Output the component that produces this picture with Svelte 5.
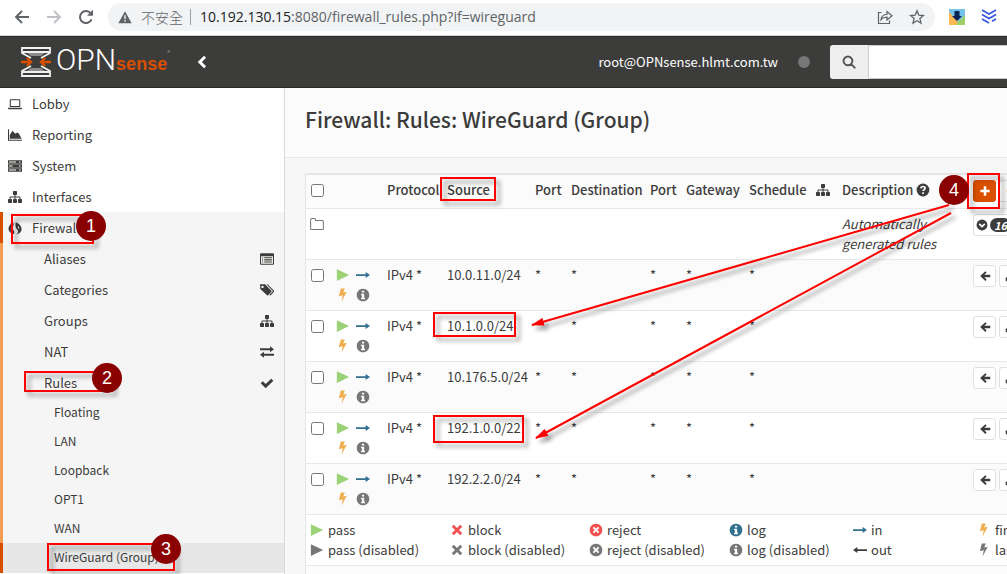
<script lang="ts">
    type MenuItem = { label: string; icon: string };

    const sitemap =
        '<path transform="scale(.00893)" d="M1792 1248v320q0 40-28 68t-68 28h-320q-40 0-68-28t-28-68v-320q0-40 28-68t68-28h96v-192h-512v192h96q40 0 68 28t28 68v320q0 40-28 68t-68 28h-320q-40 0-68-28t-28-68v-320q0-40 28-68t68-28h96v-192h-512v192h96q40 0 68 28t28 68v320q0 40-28 68t-68 28h-320q-40 0-68-28t-28-68v-320q0-40 28-68t68-28h96v-192q0-52 38-90t90-38h512v-192h-96q-40 0-68-28t-28-68v-320q0-40 28-68t68-28h320q40 0 68 28t28 68v320q0 40-28 68t-68 28h-96v192h512q52 0 90 38t38 90v192h96q40 0 68 28t28 68z"/>';

    // all icons sit on a 16x16 grid
    const icons: Record<string, string> = {
        laptop: '<path fill-rule="evenodd" d="M3 2.500h10a1 1 0 0 1 1 1v7a1 1 0 0 1-1 1H3a1 1 0 0 1-1-1v-7a1 1 0 0 1 1-1zm.2 1.200v6.600h9.600V3.700zM0 12.200h16v1a.8.8 0 0 1-.8.8H.8a.8.8 0 0 1-.8-.8z"/>',
        chart: '<path d="M0 1.500h1.200v11.800H16v1.200H0zM2 12.400V8L5.200 3.200l3 3.300 2.200-1.500 2.200 1.500 2.900 5.900z"/>',
        server: '<path fill-rule="evenodd" d="M0 1.500h16v3.800H0zm1.200 1.300v1.200h8V2.800zm11.300 0v1.200h1.800V2.800zM0 6.100h16v3.800H0zm1.200 1.300v1.200h4V7.400zm11.300 0v1.200h1.800V7.400zM0 10.700h16v3.800H0zM1.200 12v1.200h8V12zm11.300 0v1.200h1.800V12z"/>',
        sitemap,
        fire: '<path d="M7 1C7.800 4.800 4.300 6 5.800 9.500c.6 1.700 1.800 2.300 1.200 5.300C2.500 14.300.2 11.500.6 8.200c.4-2.700 2.200-3.300 2.500-5.500 1.100 1.100 1.100 2.200.9 3.300C5.600 4.900 6.200 3.200 7 1zM9 1.500c3.300 1.600 7.200 4.400 6.400 8.800-.4 2.700-2.700 4.300-5.800 4.700 2.700-1.700 2.200-3.700.8-5.500C8.700 7.500 7.900 4.800 9 1.500zm2.300 3.900c-.2 1.700.8 2.800 1.100 4.400.9-1.700.3-3.300-1.100-4.400z"/>',
        list: '<path fill-rule="evenodd" d="M1.200 1.500h13.600A1.200 1.200 0 0 1 16 2.700v10.600a1.200 1.200 0 0 1-1.200 1.200H1.200A1.200 1.200 0 0 1 0 13.300V2.700a1.200 1.200 0 0 1 1.200-1.200zm0 3.400v8.400h13.600V4.900zM2.400 6h1.200v1.200H2.400zm2.400 0h8.800v1.200H4.800zM2.400 8.400h1.200v1.200H2.400zm2.400 0h8.800v1.200H4.800zM2.400 10.800h1.200V12H2.400zm2.400 0h8.800V12H4.800z"/>',
        tags: '<path fill-rule="evenodd" d="M0 1.500h5.800L13 8.800a1 1 0 0 1 0 1.300l-4.300 4.400L.3 6.800zM2.800 3a1.400 1.400 0 1 0 .1 0z"/><path d="M7.500 1.500h1.300L16 8.800a1 1 0 0 1 0 1.300l-4.300 4.400-1-1 4.100-4.100z"/>',
        exchange: '<path d="M0 3.800h11.500V1.500L16 4.900l-4.500 3.400V6H0zM16 10H4.500V7.700L0 11.100l4.500 3.400v-2.300H16z"/>',
        check: '<path d="M.8 8.300 3.200 6l3.300 3.200 6.300-6.200 2.500 2.400-8.800 8.700z"/>',
        play: '<path d="M1 1.300 15 8 1 14.800z"/>',
        right: '<path d="M0 7h11V4.500L16 8l-5 3.500V9H0z"/>',
        left: '<path d="M16 7H5V4.500L0 8l5 3.500V9h11z"/>',
        bolt: '<path d="M5.500.5H10L8.300 5.200l4-.8L6.200 15.800l1.600-7.500-4.500 1z"/>',
        info: '<path fill-rule="evenodd" d="M8 .8a7.200 7.200 0 1 0 .01 0zM6.800 3h2.500v2.200H6.800zM5.800 6.500h3.500v4.600h1v1.700H5.800v-1.700h1V8.200h-1z"/>',
        times: '<path d="m4.300 2 3.700 3.700L11.700 2 14 4.300 10.300 8l3.700 3.700-2.300 2.300L8 10.300 4.300 14 2 11.700 5.700 8 2 4.300z"/>',
        reject: '<path fill-rule="evenodd" d="M8 .8a7.200 7.200 0 1 0 .01 0zM5.800 4.300 8 6.500l2.200-2.200 1.500 1.500L9.500 8l2.200 2.200-1.500 1.500L8 9.500l-2.200 2.200-1.500-1.500L6.500 8 4.300 5.800z"/>',
        help: '<circle cx="8" cy="8" r="7.300"/><path d="M5.600 6.200C5.700 4.600 6.800 4 8 4s2.400.7 2.400 2c0 1.600-2.300 1.700-2.300 3.200M8.100 10.600v1.900" fill="none" stroke="#fff" stroke-width="1.900"/>',
        plus: '<path d="M6.300 1.800h3.400v4.500h4.500v3.400H9.700v4.500H6.300V9.700H1.800V6.300h4.500z"/>',
        folder: '<path d="M.7 13V3a1.200 1.200 0 0 1 1.200-1.200h3.300A1.200 1.200 0 0 1 6.400 3v1h7.700a1.200 1.200 0 0 1 1.200 1.200V13a1.200 1.200 0 0 1-1.200 1.200H1.900A1.200 1.200 0 0 1 .7 13z" fill="none" stroke="currentColor" stroke-width="1.200"/>',
        arrowLeft: '<path d="m8.500 1.500 1.700 1.700-3.100 3.200H15v3.200H7.100l3.100 3.200-1.700 1.700L1.500 8z"/>',
        pencil: '<path d="M1 15v-4L10 2l4 4-9 9z"/>',
        down: '<circle cx="8" cy="8" r="7.300"/><path d="M4.300 6.500 8 10.200l3.700-3.700" fill="none" stroke="#fff" stroke-width="2.200"/>',
        search: '<path d="M6.800 1.800a5 5 0 1 0 .01 0zM10.500 10.500l4 4" fill="none" stroke="currentColor" stroke-width="2.200" stroke-linecap="round"/>',
        back: '<path d="M15 8H2M8 2 2 8l6 6" fill="none" stroke="currentColor" stroke-width="1.900"/>',
        forward: '<path d="M1 8h13M8 2l6 6-6 6" fill="none" stroke="currentColor" stroke-width="1.900"/>',
        reload: '<path d="M13.500 10.300A6 6 0 1 1 12.600 4.200" fill="none" stroke="currentColor" stroke-width="2"/><path d="M15 .8v6H9z"/>',
        warning: '<path fill-rule="evenodd" d="M8 1.500 15.600 15H.4zM7.200 6v4.500h1.600V6zm0 5.700v1.600h1.600v-1.600z"/>',
        share: '<path d="M4.500 3.500H1.500v11h11v-3M4 10.500c.5-3.500 2.500-5 6-5V2.500l5 4.300-5 4.200V8.200c-2.800 0-4.600.6-6 2.300z" fill="none" stroke="currentColor" stroke-width="1.200"/>',
        star: '<path d="m8 1.800 1.800 4.400 4.700.3-3.600 3.100 1.100 4.600L8 11.700l-4 2.500 1.100-4.600L1.500 6.500l4.700-.3z" fill="none" stroke="currentColor" stroke-width="1.300"/>',
        chevron: '<path d="M11.500 2 5.500 8l6 6" fill="none" stroke="currentColor" stroke-width="3.400"/>'
    };

    const topMenu: MenuItem[] = [
        { label: 'Lobby', icon: 'laptop' },
        { label: 'Reporting', icon: 'chart' },
        { label: 'System', icon: 'server' },
        { label: 'Interfaces', icon: 'sitemap' }
    ];

    const firewallMenu: MenuItem[] = [
        { label: 'Aliases', icon: 'list' },
        { label: 'Categories', icon: 'tags' },
        { label: 'Groups', icon: 'sitemap' },
        { label: 'NAT', icon: 'exchange' },
        { label: 'Rules', icon: 'check' }
    ];

    const ruleMenu = ['Floating', 'LAN', 'Loopback', 'OPT1', 'WAN', 'WireGuard (Group)'];

    const sources = ['10.0.11.0/24', '10.1.0.0/24', '10.176.5.0/24', '192.1.0.0/22', '192.2.2.0/24'];

    const legend = [
        { icon: 'play', label: 'pass', color: 'green' },
        { icon: 'times', label: 'block', color: 'red' },
        { icon: 'reject', label: 'reject', color: 'red' },
        { icon: 'info', label: 'log', color: 'blue' },
        { icon: 'right', label: 'in', color: 'blue' },
        { icon: 'bolt', label: 'first match', color: 'amber' },
        { icon: 'play', label: 'pass (disabled)', color: 'grey' },
        { icon: 'times', label: 'block (disabled)', color: 'grey' },
        { icon: 'reject', label: 'reject (disabled)', color: 'grey' },
        { icon: 'info', label: 'log (disabled)', color: 'grey' },
        { icon: 'left', label: 'out', color: 'dark' },
        { icon: 'bolt', label: 'last match', color: 'grey' }
    ];

    // callouts drawn over the page
    const boxes = [
        [12, 215, 81, 28],
        [25, 372, 87, 19],
        [48, 544, 126, 26],
        [441, 178, 54, 22],
        [434, 313, 81, 23],
        [434, 416, 89, 26],
        [968, 174, 31, 34]
    ];
    const badges = [
        [91, 226],
        [107, 378],
        [166, 549],
        [954, 190]
    ];
    const arrows = [
        [949, 205, 532, 325],
        [951, 213, 536, 438]
    ];

    let selected: boolean[] = $state(sources.map(() => false));
    let allSelected = $derived(selected.every(Boolean));

    function toggleAll() {
        const next = !allSelected;
        selected = selected.map(() => next);
    }
</script>

{#snippet icon(name: string, color = '')}
    <svg class="icon {color}" viewBox="0 0 16 16" aria-hidden="true">{@html icons[name]}</svg>
{/snippet}

<div class="page">
    <div class="browser">
        <button class="nav" aria-label="Back">{@render icon('back')}</button>
        <button class="nav off" aria-label="Forward">{@render icon('forward')}</button>
        <button class="nav" aria-label="Reload">{@render icon('reload')}</button>
        <div class="address">
            {@render icon('warning')}
            <span class="insecure">不安全</span>
            <span class="url">10.192.130.15<span>:8080/firewall_rules.php?if=wireguard</span></span>
            <button class="nav share" aria-label="Share">{@render icon('share')}</button>
            <button class="nav" aria-label="Bookmark">{@render icon('star')}</button>
        </div>
        <svg class="extension" viewBox="0 0 16 16" aria-hidden="true">
            <path fill="#72c2ea" d="M0 0h16v16H0z" />
            <path fill="#fcb954" d="M0 3v13h8l1-4z" />
            <path fill="#9fcf67" d="M6 16 16 6v10z" />
            <path fill="#062354" d="M5.500 2h5v5H13l-5 5-5-5h2.500z" />
        </svg>
        <svg class="extension" viewBox="0 0 16 16" aria-hidden="true">
            <path d="m1 1 7 4 7-4M1 5.500l7 4 7-4M1 10l7 4M11 12.300l4-2.300" fill="none" stroke="#3455e0" stroke-width="1.600" />
        </svg>
    </div>

    <header>
        <a class="brand" href="#lobby" aria-label="OPNsense">
            <svg viewBox="0 0 30 30" aria-hidden="true">
                <path d="M5 5h20l-5 4H10zM5 25h20l-5-4H10z" fill="#8b8b8b" />
                <path d="M10 11 1 6V1h28v5l-9 5M10 19l-9 5v5h28v-5l-9-5M2 5h26M2 25h26" fill="none" stroke="#f2f2f2" stroke-width="1.800" />
                <path d="M0 15h10M6 11l4 4-4 4M30 15H20M24 11l-4 4 4 4" fill="none" stroke="#d94f00" stroke-width="2.400" />
            </svg>
            <span class="word"><span class="opn">OPN</span><span class="sense">sense</span></span><sup>®</sup>
        </a>
        <button class="collapse" aria-label="Toggle menu">{@render icon('chevron')}</button>
        <span class="user">root@OPNsense.hlmt.com.tw</span>
        <span class="status"></span>
        <form class="search">
            <button type="button" aria-label="Search">{@render icon('search')}</button>
            <input type="text" aria-label="Search menu" />
        </form>
    </header>

    <div class="body">
        <nav class="menu">
            {#each topMenu as item}
                <a href="#{item.label}">{@render icon(item.icon)}{item.label}</a>
            {/each}
            <div class="open">
                <a class="current" href="#firewall">{@render icon('fire')}Firewall</a>
                {#each firewallMenu as item}
                    <a class="sub" href="#{item.label}">{item.label}{@render icon(item.icon)}</a>
                {/each}
                {#each ruleMenu as label}
                    <a class="leaf" class:active={label === 'WireGuard (Group)'} href="#{label}">{label}</a>
                {/each}
            </div>
        </nav>

        <main>
            <div class="title">
                <h1>Firewall: Rules: WireGuard (Group)</h1>
            </div>
            <div class="content">
                <table>
                    <thead>
                        <tr>
                            <th class="c-check"><input type="checkbox" aria-label="Select all" checked={allSelected} onchange={toggleAll} /></th>
                            <th class="c-icons"></th>
                            <th class="c-proto">Protocol</th>
                            <th class="c-source">Source</th>
                            <th class="c-port">Port</th>
                            <th class="c-dest">Destination</th>
                            <th class="c-port">Port</th>
                            <th class="c-gateway">Gateway</th>
                            <th class="c-schedule">Schedule</th>
                            <th class="c-map">{@render icon('sitemap')}</th>
                            <th>Description {@render icon('help')}</th>
                            <th class="c-actions">
                                <div class="actions">
                                    <button class="add" aria-label="Add">{@render icon('plus')}</button>
                                    <button aria-label="Move selected">{@render icon('arrowLeft', 'amber')}</button>
                                </div>
                            </th>
                        </tr>
                    </thead>
                    <tbody>
                        <tr>
                            <td>{@render icon('folder', 'grey')}</td>
                            <td colspan="9"></td>
                            <td><i>Automatically generated rules</i></td>
                            <td>
                                <div class="actions">
                                    <button class="count" aria-label="Show generated rules">{@render icon('down')}<b>16</b></button>
                                </div>
                            </td>
                        </tr>
                        {#each sources as source, i}
                            <tr>
                                <td><input type="checkbox" aria-label="Select {source}" bind:checked={selected[i]} /></td>
                                <td>
                                    <div class="flags">
                                        {@render icon('play', 'green')}
                                        {@render icon('right', 'blue')}
                                        {@render icon('bolt', 'amber')}
                                        {@render icon('info', 'grey')}
                                    </div>
                                </td>
                                <td>IPv4 *</td>
                                <td>{source}</td>
                                <td>*</td>
                                <td>*</td>
                                <td>*</td>
                                <td>*</td>
                                <td>*</td>
                                <td></td>
                                <td></td>
                                <td>
                                    <div class="actions">
                                        <button aria-label="Move before">{@render icon('arrowLeft')}</button>
                                        <button aria-label="Edit">{@render icon('pencil')}</button>
                                    </div>
                                </td>
                            </tr>
                        {/each}
                        <tr>
                            <td colspan="12">
                                <div class="legend">
                                    {#each legend as entry}
                                        <span>{@render icon(entry.icon, entry.color)}{entry.label}</span>
                                    {/each}
                                </div>
                            </td>
                        </tr>
                        <tr><td colspan="12">&nbsp;</td></tr>
                    </tbody>
                </table>
            </div>
        </main>
    </div>

    <svg class="callouts" aria-hidden="true">
        <defs>
            <marker id="head" markerUnits="userSpaceOnUse" markerWidth="14" markerHeight="8" refX="12" refY="4" orient="auto">
                <path d="M0 0 13 4 0 8z" fill="#f00" />
            </marker>
        </defs>
        <g class="marks">
            {#each boxes as [x, y, width, height]}
                <rect {x} {y} {width} {height} />
            {/each}
            {#each arrows as [x1, y1, x2, y2]}
                <line {x1} {y1} {x2} {y2} marker-end="url(#head)" />
            {/each}
        </g>
        {#each badges as [x, y], i}
            <circle cx={x} cy={y} r="15" />
            <text {x} y={y + 6}>{i + 1}</text>
        {/each}
    </svg>
</div>

<style>
    :global(body) {
        margin: 0;
    }
    .page {
        position: relative;
        display: flex;
        flex-direction: column;
        height: 100vh;
        overflow: hidden;
        color: #3c3c3b;
        font-family: "Noto Sans CJK TC", "Noto Sans", sans-serif;
        font-size: 13px;
        line-height: 20px;
    }
    button {
        display: flex;
        align-items: center;
        justify-content: center;
        box-sizing: border-box;
        padding: 0;
        border: none;
        background: none;
        color: inherit;
        font: inherit;
    }
    a {
        color: inherit;
        text-decoration: none;
    }
    .icon {
        flex-shrink: 0;
        width: 14px;
        height: 14px;
        fill: currentColor;
    }
    .green { color: #9bd275; }
    .red { color: #f05050; }
    .blue { color: #31708f; }
    .amber { color: #f0ad4e; }
    .grey { color: #777; }
    .dark { color: #3c3c3b; }

    /* browser toolbar */
    .browser {
        display: flex;
        align-items: center;
        flex-shrink: 0;
        box-sizing: border-box;
        height: 36px;
        padding: 0 10px 2px 14px;
        border-bottom: 1px solid #d5d6d8;
        background: #fff;
        color: #5f6368;
    }
    .nav {
        width: 16px;
        margin-right: 16px;
    }
    .nav .icon {
        width: 16px;
        height: 16px;
    }
    .off {
        color: #bdc1c6;
    }
    .address {
        display: flex;
        flex: 1;
        align-items: center;
        box-sizing: border-box;
        height: 28px;
        margin-left: -2px;
        margin-right: 14px;
        padding: 0 10px;
        border-radius: 14px;
        background: #f1f3f4;
        font-size: 14px;
    }
    .address .nav:last-child {
        margin-right: 0;
    }
    .insecure {
        margin-left: 9px;
        padding-right: 7px;
        border-right: 1px solid #9aa0a6;
        font-weight: 300;
        line-height: 16px;
    }
    .url {
        padding-left: 9px;
        color: #202124;
        font-family: "Open Sans", "Noto Sans", sans-serif;
    }
    .url span {
        color: #5f6368;
    }
    .share {
        margin-left: auto;
    }
    .extension {
        width: 16px;
        height: 16px;
    }
    .extension + .extension {
        margin-left: 16px;
    }

    /* top bar */
    header {
        display: flex;
        align-items: center;
        flex-shrink: 0;
        box-sizing: border-box;
        height: 52px;
        padding-left: 21px;
        border-top: 1px solid #2a2a29;
        border-bottom: 1px solid #2a2a29;
        background: #3c3c3b;
        color: #fff;
    }
    .brand {
        display: flex;
        align-items: center;
        width: 152px;
    }
    .brand svg {
        flex-shrink: 0;
        width: 30px;
        height: 30px;
        margin-right: 5px;
    }
    .word {
        line-height: 34px;
    }
    .opn {
        font-family: Roboto, sans-serif;
        font-size: 30px;
        font-weight: 300;
    }
    .sense {
        color: #d94f00;
        font-family: "Liberation Sans", sans-serif;
        font-size: 18px;
        font-weight: bold;
    }
    sup {
        align-self: flex-start;
        color: #999;
        font-size: 6px;
    }
    .collapse {
        margin-left: 22px;
    }
    .user {
        margin-left: auto;
    }
    .status {
        width: 12px;
        height: 12px;
        margin: 0 20px;
        border-radius: 50%;
        background: #777;
    }
    .search {
        display: flex;
        height: 34px;
    }
    .search button {
        width: 38px;
        border-radius: 3px 0 0 3px;
        background: #eee;
        color: #555;
    }
    .search input {
        box-sizing: border-box;
        width: 139px;
        padding: 0 12px;
        border: 1px solid #ccc;
        border-right: none;
        background: #fff;
    }

    .body {
        display: flex;
        flex: 1;
        min-height: 0;
    }

    /* side menu */
    .menu {
        flex-shrink: 0;
        box-sizing: border-box;
        width: 285px;
        border-right: 1px solid #d9d9d9;
        background: #fff;
    }
    .menu a {
        display: flex;
        align-items: center;
        box-sizing: border-box;
        height: 31px;
        padding: 0 10px 0 8px;
    }
    .menu > a .icon,
    .current .icon {
        margin-right: 10px;
    }
    .open {
        background: #f5f5f5;
    }
    .open a {
        border-left: 3px solid #f39c54;
    }
    .open .current {
        padding-left: 5px;
        border-color: #d94f00;
    }
    .open .sub {
        justify-content: space-between;
        padding-left: 41px;
    }
    .open .leaf {
        height: 29px;
        padding-bottom: 2px;
        padding-left: 51px;
        font-size: 12px;
    }
    .open .active {
        height: 30px;
        border-color: #d94f00;
        background: #e7e7e7;
    }

    /* rules */
    main {
        flex: 1;
        min-width: 0;
        background: #f7f7f7;
    }
    .title {
        padding: 17px 20px 23px;
        border-bottom: 1px solid #e8e8e8;
        background: #fbfbfb;
    }
    h1 {
        margin: 0;
        font-size: 21px;
        font-weight: 500;
        line-height: 29px;
    }
    .content {
        padding: 15px 0 0 20px;
    }
    table {
        width: 100%;
        border-top: 2px solid #e5e5e5;
        border-left: 1px solid #e5e5e5;
        border-spacing: 0;
        table-layout: fixed;
    }
    th,
    td {
        padding: 5px 0 5px 6px;
        border-bottom: 1px solid #e8e8e8;
        font-weight: normal;
        text-align: left;
        vertical-align: top;
        white-space: nowrap;
    }
    th {
        height: 22px;
        padding-bottom: 6px;
        font-weight: 500;
    }
    td i {
        white-space: normal;
    }
    tr {
        background: #fbfbfb;
    }
    tbody tr:nth-child(odd) {
        background: #fff;
    }
    th .icon,
    td > .icon {
        vertical-align: -2px;
    }
    th:first-child,
    td:first-child {
        padding-left: 4px;
    }
    .c-check { width: 20px; }
    .c-icons { width: 45px; }
    .c-proto { width: 54px; }
    .c-source { width: 82px; }
    .c-port { width: 30px; }
    .c-dest { width: 73px; }
    .c-gateway { width: 57px; }
    .c-schedule { width: 61px; }
    .c-map { width: 20px; }
    .c-actions { width: 34px; }
    table input {
        display: block;
        width: 13px;
        height: 13px;
        margin: 4px 0 0 1px;
    }
    .flags {
        display: grid;
        grid-template-columns: 14px 14px;
        column-gap: 6px;
        grid-auto-rows: 20px;
        align-items: center;
    }
    .actions {
        display: flex;
        gap: 3px;
        overflow: hidden;
    }
    .actions button {
        flex-shrink: 0;
        width: 23px;
        height: 22px;
        border: 1px solid #e0e0e0;
        border-radius: 3px;
        background: #fff;
    }
    .actions .icon {
        width: 12px;
        height: 12px;
    }
    .actions .add {
        border-color: #d94f00;
        background: #d94f00;
        color: #fff;
    }
    .actions .count {
        justify-content: flex-start;
        gap: 2px;
        width: 44px;
        padding-left: 2px;
    }
    .count b {
        padding: 0 4px;
        border-radius: 8px;
        background: #3c3c3b;
        color: #fff;
        font-size: 11px;
        font-style: italic;
        line-height: 14px;
    }
    .legend {
        display: grid;
        grid-template-columns: 140px 139px 140px 124px 124px auto;
        overflow: hidden;
    }
    .legend span {
        display: flex;
        align-items: center;
        gap: 4px;
    }

    .callouts {
        position: absolute;
        inset: 0;
        width: 100%;
        height: 100%;
        pointer-events: none;
    }
    .marks {
        fill: none;
        stroke: #f00;
        stroke-width: 2;
        filter: drop-shadow(4px 4px 2px rgba(0, 0, 0, 0.4));
    }
    marker path {
        stroke: none;
    }
    circle {
        fill: #8b0000;
    }
    text {
        fill: #fff;
        font-family: "Liberation Sans", sans-serif;
        font-size: 18px;
        text-anchor: middle;
    }
</style>
